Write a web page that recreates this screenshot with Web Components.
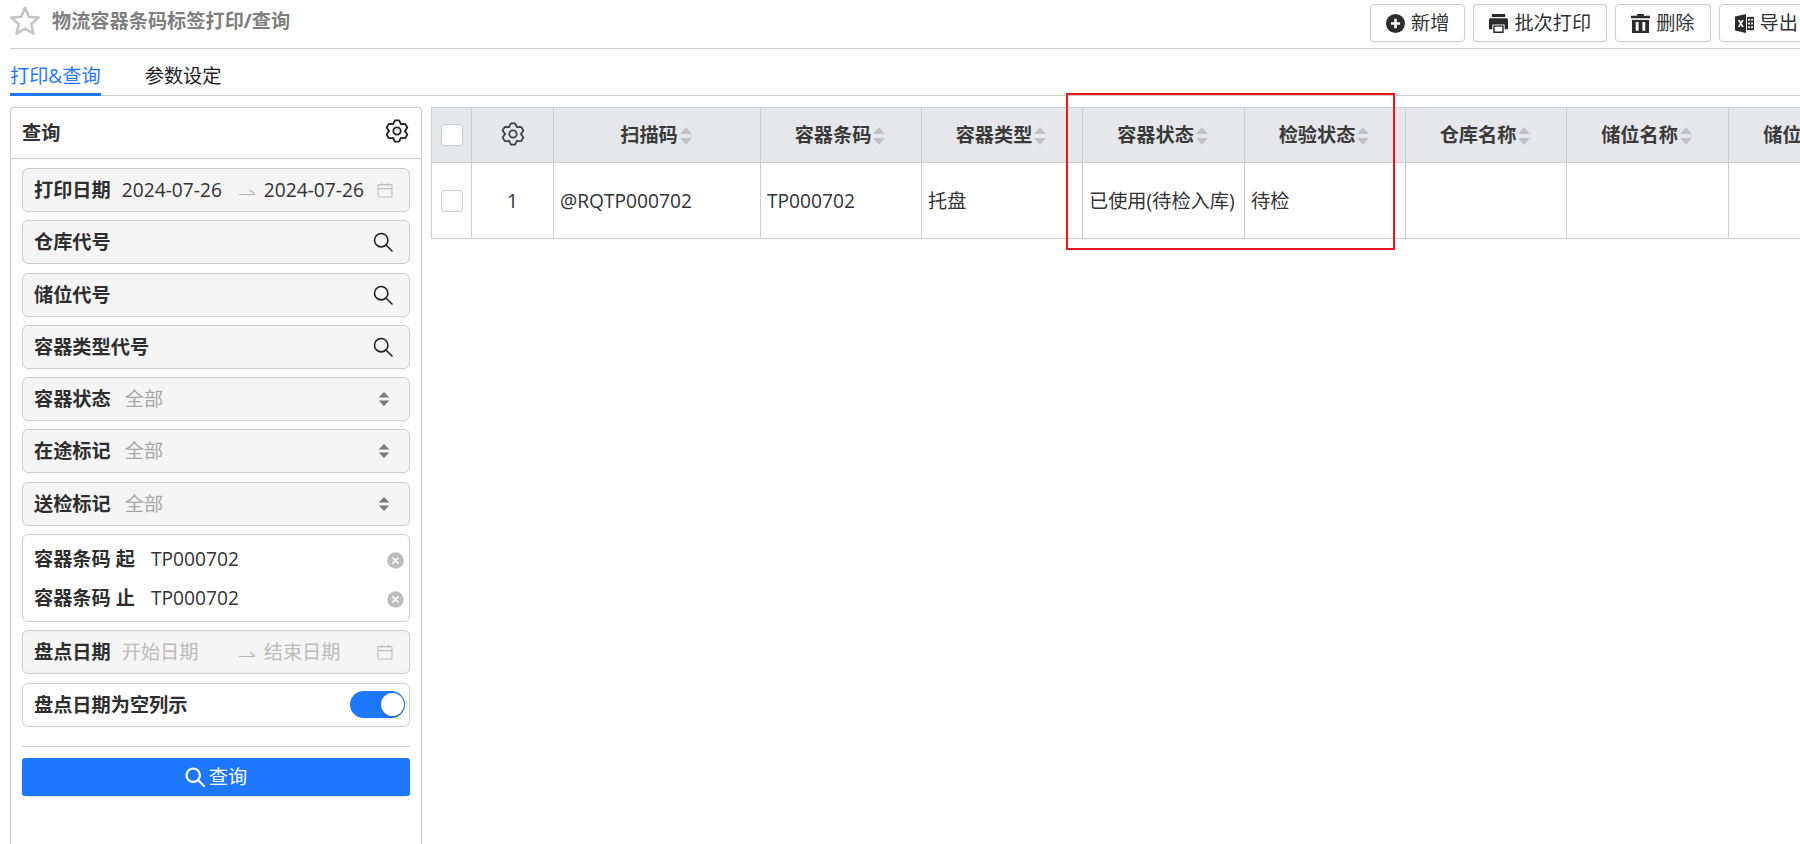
<!DOCTYPE html>
<html lang="zh-CN">
<head>
<meta charset="utf-8">
<title>物流容器条码标签打印/查询</title>
<style>
  html, body { margin: 0; height: 100%; overflow: hidden; background: #fff; }
  body { font: 19.2px/26px "Open Sans", "Noto Sans CJK SC", sans-serif; color: #333; }
</style>
</head>
<body>
<app-shell>
  <title-bar slot="top" heading="物流容器条码标签打印/查询">
    <tool-button icon="plus">新增</tool-button>
    <tool-button icon="print">批次打印</tool-button>
    <tool-button icon="trash">删除</tool-button>
    <tool-button icon="excel">导出</tool-button>
  </title-bar>
  <tab-bar slot="top">
    <tab-item active>打印&amp;查询</tab-item>
    <tab-item>参数设定</tab-item>
  </tab-bar>
  <search-panel slot="side">
    <search-field label="打印日期" type="date" from="2024-07-26" to="2024-07-26"></search-field>
    <search-field label="仓库代号" type="lookup"></search-field>
    <search-field label="储位代号" type="lookup"></search-field>
    <search-field label="容器类型代号" type="lookup"></search-field>
    <search-field label="容器状态" type="select" value="全部"></search-field>
    <search-field label="在途标记" type="select" value="全部"></search-field>
    <search-field label="送检标记" type="select" value="全部"></search-field>
    <range-field label-from="容器条码 起" label-to="容器条码 止" value="TP000702"></range-field>
    <search-field label="盘点日期" type="date" placeholder-from="开始日期" placeholder-to="结束日期"></search-field>
    <switch-field label="盘点日期为空列示"></switch-field>
  </search-panel>
  <data-table slot="main"></data-table>
  <red-mark slot="main"></red-mark>
</app-shell>

<script>
// six tooth outline gear, same one in panel header and table header
function gearPath() {
  const pts = [];
  for (let k = 0; k < 6; k++) {
    const a = k * 60 - 90;
    [[-31, 7.9], [-11, 10.9], [11, 10.9], [31, 7.9]].forEach(([d, r]) => {
      const t = (a + d) * Math.PI / 180;
      pts.push((12 + r * Math.cos(t)).toFixed(2) + ' ' + (12 + r * Math.sin(t)).toFixed(2));
    });
  }
  return 'M' + pts.join('L') + 'Z';
}

const ICONS = {
  gear: `<svg viewBox="0 0 24 24" fill="none" stroke="currentColor" stroke-width="1.8" stroke-linejoin="round"><circle cx="12" cy="12" r="3.7"/><path d="${gearPath()}"/></svg>`,
  search: '<svg viewBox="0 0 20 20" fill="none" stroke="currentColor" stroke-width="1.6"><circle cx="8.2" cy="8.2" r="6.7"/><path d="M13 13l6 6" stroke-linecap="round"/></svg>',
  calendar: '<svg viewBox="0 0 16 16" fill="none" stroke="currentColor" stroke-width="1.1"><rect x="1" y="2.6" width="14" height="12.4" rx="1"/><path d="M1 6.6h14M4.6 .8v3M11.4 .8v3"/></svg>',
  arrow: '<svg viewBox="0 0 16 8" fill="none" stroke="currentColor" stroke-width="1.2"><path d="M0 6.5h16L11 2"/></svg>',
  updown: '<svg viewBox="0 0 12 14" fill="currentColor"><path d="M6 0l5.4 5.6H.6zM6 14L.6 8.4h10.8z"/></svg>',
  clear: '<svg viewBox="0 0 17 17"><circle cx="8.5" cy="8.5" r="8.3" fill="#bdbdbd"/><path d="M5.9 5.9l5.2 5.2M11.1 5.9l-5.2 5.2" stroke="#fff" stroke-width="1.5" stroke-linecap="round"/></svg>',
  plus: '<svg viewBox="0 0 18 18"><circle cx="9" cy="9" r="9" fill="currentColor"/><path d="M9 4.600v8.800M4.600 9h8.800" stroke="#fff" stroke-width="2.4"/></svg>',
  print: '<svg viewBox="0 0 20 20" fill="currentColor"><path d="M3 0h14v3.200H3z"/><path d="M0 6a1.500 1.500 0 0 1 1.500-1.500h17A1.500 1.500 0 0 1 20 6v10h-3.500v-5h-13v5H0z"/><path d="M4.500 12h11v8h-11z"/><path d="M6 13.400h8v5H6z" fill="#fff"/></svg>',
  trash: '<svg viewBox="0 0 20 20" fill="currentColor"><path d="M6.500 0h7v1.800H20v2.800H0V1.800h6.500z"/><path d="M1 6.200h18V20H1z"/><path d="M5 8.500h3V17.500H5zM12 8.500h3V17.500h-3z" fill="#fff"/></svg>',
  excel: '<svg viewBox="0 0 20 20" fill="currentColor"><path d="M0 2.600L11.600 0v20L0 17.400z"/><path d="M12.600 3H20v14h-7.400z"/><path d="M3 6.200h2l1.100 2.300 1.200-2.300h1.900l-2.100 3.700 2.200 3.900h-2l-1.200-2.500-1.300 2.500H3l2.200-3.900z" fill="#fff"/><path d="M13.800 5h1.900v2h-1.900zM17 5h1.800v2H17zM13.800 9h1.900v2h-1.900zM17 9h1.800v2H17zM13.800 13h1.900v2h-1.900zM17 13h1.800v2H17z" fill="#fff"/></svg>'
};

class AppShell extends HTMLElement {
  connectedCallback() {
    this.attachShadow({ mode: 'open' });
    this.shadowRoot.innerHTML = `
      <style>
        :host { display: flex; flex-direction: column; height: 844px; padding-left: 10px; box-sizing: border-box; overflow: hidden; }
        .body { display: flex; flex: 1; min-height: 0; gap: 9px; padding-top: 11px; }
        .main { position: relative; flex: 1; min-width: 0; }
        .side { flex: none; width: 412px; display: flex; }
      </style>
      <slot name="top"></slot>
      <div class="body">
        <div class="side"><slot name="side"></slot></div>
        <div class="main"><slot name="main"></slot></div>
      </div>
    `;
  }
}

class TitleBar extends HTMLElement {
  connectedCallback() {
    this.attachShadow({ mode: 'open' });
    this.shadowRoot.innerHTML = `
      <style>
        :host { display: flex; align-items: center; height: 48px; border-bottom: 1px solid #ccc; }
        svg { flex: none; width: 30px; height: 30px; margin-top: -6px; }
        h1 { flex: 1; margin: 0 0 6px 12px; font-size: 19.2px; line-height: 26px; font-weight: 700; color: #7f7f7f; white-space: nowrap; }
        .actions { flex: none; width: 430px; display: flex; gap: 8px; overflow: hidden; padding-bottom: 6px; }
      </style>
      <svg viewBox="1.5 1.500 27 27"><path d="M15 3.200l3.500 8 8.700.8-6.600 5.800 2 8.500-7.600-4.500-7.600 4.500 2-8.500L2.800 12l8.700-.8z" fill="none" stroke="#c6c6c6" stroke-width="2.400" stroke-linejoin="round"/></svg>
      <h1>${this.getAttribute('heading')}</h1>
      <div class="actions"><slot></slot></div>
    `;
  }
}

class ToolButton extends HTMLElement {
  connectedCallback() {
    this.attachShadow({ mode: 'open' });
    this.shadowRoot.innerHTML = `
      <style>
        :host { flex: none; display: flex; align-items: center; justify-content: center; gap: 6px; height: 38px; padding: 0 15px; box-sizing: border-box; margin-top: 4px; border: 1px solid #ccc; border-radius: 4px; background: #fff; color: #333; box-shadow: 0 1px 2px rgba(0,0,0,.06); white-space: nowrap; }
        span { display: flex; width: 19px; height: 19px; color: #2b2b2b; }
        svg { width: 100%; height: 100%; }
      </style>
      <span>${ICONS[this.getAttribute('icon')]}</span><slot></slot>
    `;
  }
}

class TabBar extends HTMLElement {
  connectedCallback() {
    this.attachShadow({ mode: 'open' });
    this.shadowRoot.innerHTML = `
      <style>
        :host { display: flex; gap: 44px; height: 47px; box-sizing: border-box; border-bottom: 1px solid #ccc; }
      </style>
      <slot></slot>
    `;
  }
}

class TabItem extends HTMLElement {
  connectedCallback() {
    this.attachShadow({ mode: 'open' });
    const on = this.hasAttribute('active');
    this.shadowRoot.innerHTML = `
      <style>
        :host { display: block; height: 47px; box-sizing: border-box; padding-top: 14px; line-height: 26px; color: ${on ? '#1e78ff' : '#222'}; border-bottom: 3px solid ${on ? '#1e78ff' : 'transparent'}; }
      </style>
      <slot></slot>
    `;
  }
}

class SearchPanel extends HTMLElement {
  connectedCallback() {
    this.attachShadow({ mode: 'open' });
    this.shadowRoot.innerHTML = `
      <style>
        :host { display: flex; flex-direction: column; flex: 1; box-sizing: border-box; border: 1px solid #ccc; border-bottom: 0; border-radius: 4px 4px 0 0; }
        header { display: flex; align-items: center; justify-content: space-between; height: 50px; padding: 0 12px 0 11px; border-bottom: 1px solid #ccc; font-weight: 700; }
        header span { display: flex; width: 24px; height: 24px; margin: -4px 0 0; color: #222; }
        .fields { display: flex; flex-direction: column; gap: 8.3px; padding: 9px 11px 0; }
        hr { margin: 19.400px 11px 11px; border: 0; border-top: 1px solid #ccc; }
        button { display: flex; align-items: center; justify-content: center; gap: 4px; height: 38px; margin: 0 11px; border: 0; border-radius: 3px; background: #1e78ff; color: #fff; font: inherit; box-shadow: 0 1px 2px rgba(0,0,0,.12); }
        button span { display: flex; width: 20px; height: 20px; }
        svg { width: 100%; height: 100%; }
        button svg { stroke-width: 2.2; }
      </style>
      <header>查询<span>${ICONS.gear}</span></header>
      <div class="fields"><slot></slot></div>
      <hr>
      <button type="button"><span>${ICONS.search}</span>查询</button>
    `;
  }
}

const FIELD_CSS = `
  :host { display: flex; align-items: center; height: 44px; box-sizing: border-box; padding: 0 11px; border: 1px solid #ccc; border-radius: 6px; background: #f5f5f5; white-space: nowrap; }
  b { font-weight: 700; color: #2e2e2e; }
  svg { width: 100%; height: 100%; }
`;

class SearchField extends HTMLElement {
  connectedCallback() {
    this.attachShadow({ mode: 'open' });
    const type = this.getAttribute('type');
    const label = this.getAttribute('label');
    let body = '';
    if (type === 'date') {
      const from = this.getAttribute('from');
      const to = this.getAttribute('to');
      body = `
        <span class="${from ? 'val' : 'ph'} d1">${from || this.getAttribute('placeholder-from')}</span>
        <span class="arrow">${ICONS.arrow}</span>
        <span class="${to ? 'val' : 'ph'} d2">${to || this.getAttribute('placeholder-to')}</span>
        <span class="cal">${ICONS.calendar}</span>`;
    } else if (type === 'select') {
      body = `<span class="sel">${this.getAttribute('value')}</span><span class="updown">${ICONS.updown}</span>`;
    } else {
      body = `<span class="look">${ICONS.search}</span>`;
    }
    this.shadowRoot.innerHTML = `
      <style>
        ${FIELD_CSS}
        span { display: block; }
        .val { color: #333; }
        .ph { color: #bbb; }
        .d1 { width: 117px; margin-left: 11px; }
        .d2 { width: 113px; }
        .arrow { display: flex; width: 16px; height: 8px; margin: 4px 9px 0 0; color: #b5b5b5; }
        .cal { display: flex; width: 16px; height: 16px; color: #bdbdbd; }
        .sel { flex: 1; margin-left: 14px; color: #a6a6a6; }
        .updown { display: flex; width: 12px; height: 14px; margin-right: 8px; color: #777c82; }
        .look { display: flex; width: 20px; height: 20px; margin-left: auto; margin-right: 5px; color: #222; }
      </style>
      <b>${label}</b>${body}
    `;
  }
}

class RangeField extends HTMLElement {
  connectedCallback() {
    this.attachShadow({ mode: 'open' });
    const value = this.getAttribute('value');
    const row = (label) => `<div class="row"><b>${label}</b><span class="val">${value}</span><i>${ICONS.clear}</i></div>`;
    this.shadowRoot.innerHTML = `
      <style>
        ${FIELD_CSS}
        :host { display: flex; flex-direction: column; align-items: stretch; justify-content: center; gap: 13px; height: 88px; background: #fff; padding-right: 5px; }
        .row { display: flex; align-items: center; height: 26px; }
        .val { flex: 1; margin-left: 16px; }
        i { display: flex; width: 17px; height: 17px; margin-top: 3px; }
      </style>
      ${row(this.getAttribute('label-from'))}
      ${row(this.getAttribute('label-to'))}
    `;
  }
}

class SwitchField extends HTMLElement {
  connectedCallback() {
    this.attachShadow({ mode: 'open' });
    this.shadowRoot.innerHTML = `
      <style>
        ${FIELD_CSS}
        :host { background: #fff; justify-content: space-between; padding-right: 4px; }
        .track { display: flex; justify-content: flex-end; align-items: center; width: 55px; height: 27px; box-sizing: border-box; padding-right: 1px; border-radius: 14px; background: #1e78ff; }
        .knob { width: 23px; height: 23px; border-radius: 50%; background: #fff; box-shadow: 0 1px 2px rgba(0,0,0,.25); }
      </style>
      <b>${this.getAttribute('label')}</b>
      <div class="track"><div class="knob"></div></div>
    `;
  }
}

class DataTable extends HTMLElement {
  connectedCallback() {
    this.attachShadow({ mode: 'open' });
    const cols = [
      ['扫描码', 207, '@RQTP000702'],
      ['容器条码', 161, 'TP000702'],
      ['容器类型', 161, '托盘'],
      ['容器状态', 162, '已使用(待检入库)'],
      ['检验状态', 161, '待检'],
      ['仓库名称', 161, ''],
      ['储位名称', 162, ''],
      ['储位类型', 162, '']
    ];
    const sort = '<svg class="sort" viewBox="0 0 11 17" fill="#c0c0c0"><path d="M5.500 0l5.500 6.500H0zM5.500 17L0 10.500h11z"/></svg>';
    this.shadowRoot.innerHTML = `
      <style>
        :host { display: block; overflow: hidden; }
        table { table-layout: fixed; width: ${40 + 82 + cols.reduce((s, c) => s + c[1], 0)}px; border-collapse: collapse; }
        th, td { border: 1px solid #ccc; padding: 0 6px; white-space: nowrap; overflow: hidden; }
        th { height: 54px; background: #e6e7eb; font-weight: 700; color: #3a3a3a; }
        td { height: 75px; color: #333; }
        .c { text-align: center; padding: 0; }
        .h { display: inline-flex; align-items: center; padding-right: 2px; }
        .sort { flex: none; width: 12px; height: 18px; margin: 1px 0 0 2px; }
        .box { display: block; width: 22px; height: 22px; box-sizing: border-box; margin: 0 auto; border: 1px solid #ccc; border-radius: 3px; background: #fff; }
        .gear { display: inline-flex; width: 24px; height: 24px; color: #444; margin-top: -6px; vertical-align: middle; }
        .gear svg { width: 100%; height: 100%; }
      </style>
      <table>
        <colgroup><col style="width:40px"><col style="width:82px">${cols.map(c => `<col style="width:${c[1]}px">`).join('')}</colgroup>
        <thead><tr>
          <th class="c"><span class="box"></span></th>
          <th class="c"><span class="gear">${ICONS.gear}</span></th>
          ${cols.map(c => `<th class="c"><span class="h">${c[0]}${sort}</span></th>`).join('')}
        </tr></thead>
        <tbody><tr>
          <td class="c"><span class="box"></span></td>
          <td class="c">1</td>
          ${cols.map(c => `<td>${c[2]}</td>`).join('')}
        </tr></tbody>
      </table>
    `;
  }
}

// annotation drawn over the table in the screenshot
class RedMark extends HTMLElement {
  connectedCallback() {
    this.attachShadow({ mode: 'open' });
    this.shadowRoot.innerHTML = `
      <style>
        :host { position: absolute; left: 635px; top: -14px; width: 329px; height: 157px; box-sizing: border-box; border: 2px solid #f0141e; pointer-events: none; }
      </style>
    `;
  }
}

customElements.define('app-shell', AppShell);
customElements.define('title-bar', TitleBar);
customElements.define('tool-button', ToolButton);
customElements.define('tab-bar', TabBar);
customElements.define('tab-item', TabItem);
customElements.define('search-panel', SearchPanel);
customElements.define('search-field', SearchField);
customElements.define('range-field', RangeField);
customElements.define('switch-field', SwitchField);
customElements.define('data-table', DataTable);
customElements.define('red-mark', RedMark);
</script>
</body>
</html>
